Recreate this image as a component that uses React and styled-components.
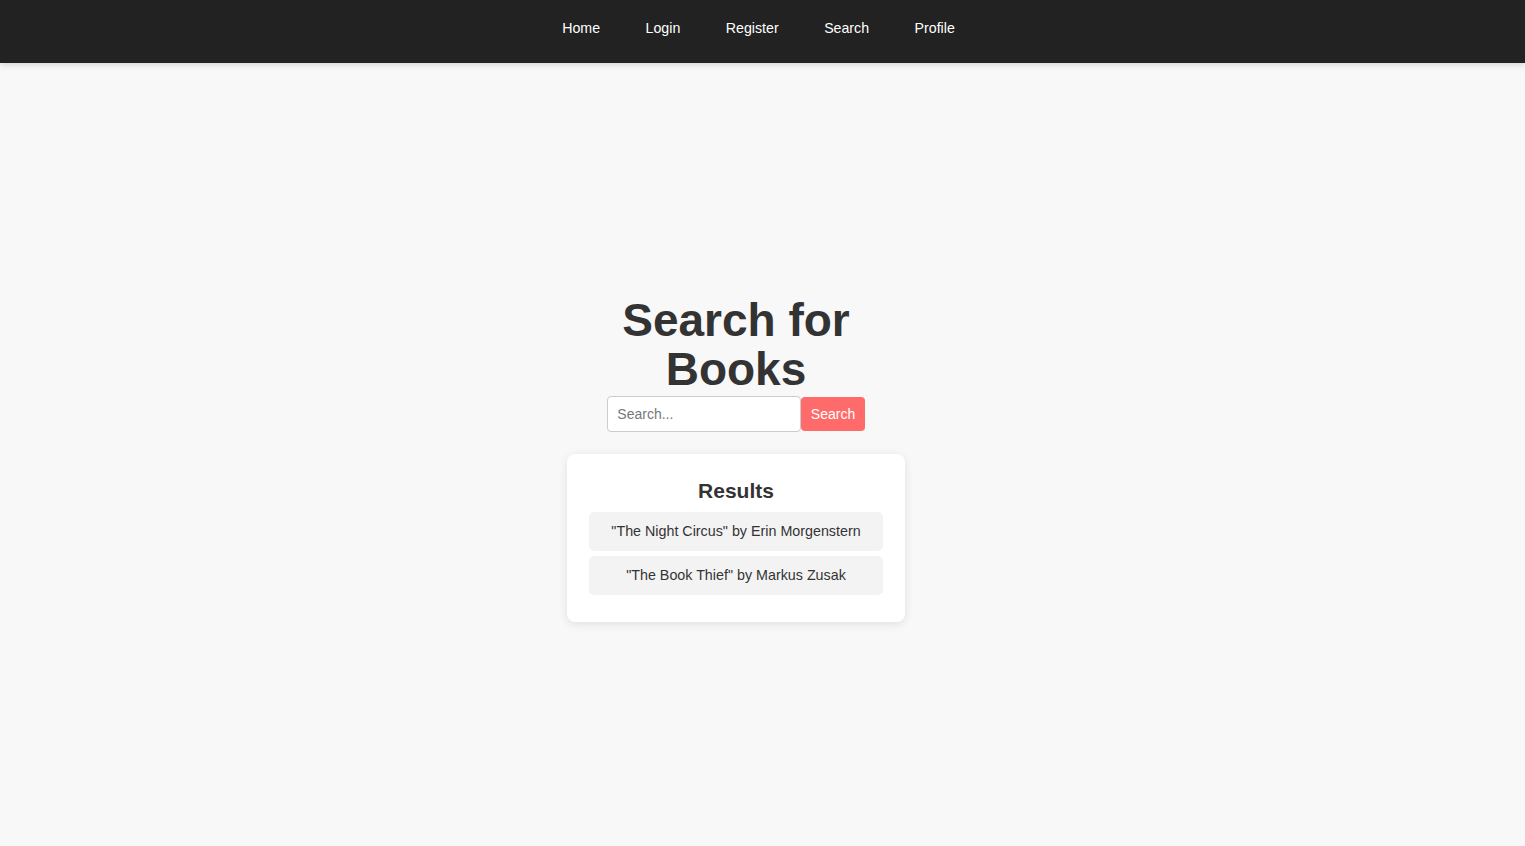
import React, { useState } from 'react';
import styled, { createGlobalStyle } from 'styled-components';

const GlobalStyle = createGlobalStyle`
  html, body {
    margin: 0;
    padding: 0;
    background: #f8f8f8;
    font-family: "Liberation Sans", Arial, sans-serif;
    color: #333;
  }
`;

const NavBar = styled.nav`
  height: 63px;
  background: #222;
  box-shadow: 0 2px 6px rgba(0, 0, 0, 0.15);
  display: flex;
  align-items: center;
  justify-content: center;
  padding-right: 8px;
  padding-bottom: 7px;
  box-sizing: border-box;
  gap: 45.5px;
`;

const NavLink = styled.a`
  color: #fff;
  font-size: 14.2px;
  text-decoration: none;
  cursor: pointer;
`;

const Main = styled.main`
  min-height: calc(100vh - 63px);
  box-sizing: border-box;
  display: flex;
  flex-direction: column;
  align-items: center;
  justify-content: center;
  padding: 9px 53px 0 0;
`;

const Column = styled.div`
  width: 338px;
  display: flex;
  flex-direction: column;
  align-items: center;
`;

const Title = styled.h1`
  margin: 0 0 2px;
  font-size: 46px;
  line-height: 49px;
  font-weight: bold;
  text-align: center;
  color: #333;
`;

const SearchRow = styled.form`
  display: flex;
  align-items: center;
`;

const SearchInput = styled.input`
  width: 194px;
  height: 36px;
  box-sizing: border-box;
  padding: 0 9px;
  border: 1px solid #ccc;
  border-radius: 4px;
  font-family: inherit;
  font-size: 14px;
  color: #333;
  background: #fff;
  outline: none;

  &::placeholder {
    color: #777;
  }
`;

const SearchButton = styled.button`
  height: 34px;
  padding: 0 9.5px;
  border: none;
  border-radius: 4px;
  background: #ff6b6b;
  color: #fff;
  font-family: inherit;
  font-size: 14px;
  cursor: pointer;
`;

const ResultsCard = styled.section`
  margin-top: 22px;
  width: 338px;
  box-sizing: border-box;
  padding: 25px 22px 22px;
  background: #fff;
  border-radius: 8px;
  box-shadow: 0 2px 10px rgba(0, 0, 0, 0.1);
`;

const ResultsTitle = styled.h2`
  margin: 0 0 9px;
  font-size: 21px;
  line-height: 24px;
  text-align: center;
  color: #333;
`;

const ResultList = styled.ul`
  list-style: none;
  margin: 0;
  padding: 0;
`;

const ResultItem = styled.li`
  margin: 5px 0;
  padding: 11px 10px;
  line-height: 17px;
  font-size: 14.3px;
  text-align: center;
  background: #f3f3f3;
  border-radius: 5px;
  color: #333;
`;

const results = [
  '"The Night Circus" by Erin Morgenstern',
  '"The Book Thief" by Markus Zusak',
];

export default function App() {
  const [query, setQuery] = useState('');

  return (
    <>
      <GlobalStyle />
      <NavBar>
        {['Home', 'Login', 'Register', 'Search', 'Profile'].map((l) => (
          <NavLink key={l}>{l}</NavLink>
        ))}
      </NavBar>
      <Main>
        <Column>
          <Title>Search for Books</Title>
          <SearchRow onSubmit={(e) => e.preventDefault()}>
            <SearchInput
              placeholder="Search..."
              value={query}
              onChange={(e) => setQuery(e.target.value)}
            />
            <SearchButton type="submit">Search</SearchButton>
          </SearchRow>
          <ResultsCard>
            <ResultsTitle>Results</ResultsTitle>
            <ResultList>
              {results.map((r) => (
                <ResultItem key={r}>{r}</ResultItem>
              ))}
            </ResultList>
          </ResultsCard>
        </Column>
      </Main>
    </>
  );
}
